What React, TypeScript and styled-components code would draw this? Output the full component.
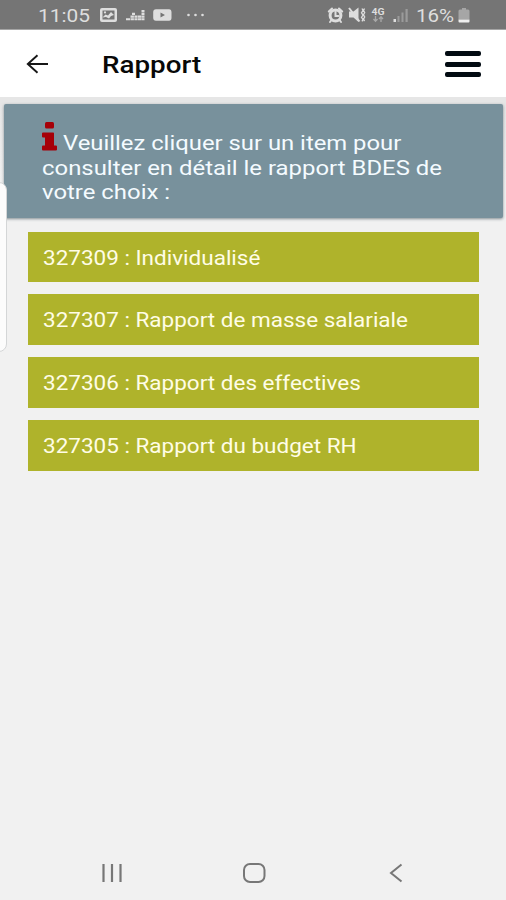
import React from "react";
import styled, { createGlobalStyle } from "styled-components";

const GlobalStyle = createGlobalStyle`
  body { margin: 0; background: #f1f1f1; }
  * { box-sizing: border-box; }
`;

const Screen = styled.div`
  position: relative;
  width: 506px;
  height: 900px;
  display: flex;
  flex-direction: column;
  overflow: hidden;
  background: #f1f1f1;
  font-family: Roboto, sans-serif;
`;

const Wide = styled.span<{ $stretch: number }>`
  display: inline-block;
  white-space: nowrap;
  transform: scaleX(${(p) => p.$stretch});
  transform-origin: left center;
`;

const StatusBar = styled.header`
  height: 30px;
  display: flex;
  justify-content: space-between;
  padding: 0 35px 0 38px;
  background: #757575;
  border-bottom: 1px solid #a5a5a5;
  color: #dedede;
  font-size: 18px;
  line-height: 31px;
`;

const StatusGroup = styled.div`
  display: flex;
`;

const Clock = styled.div`
  width: 61px;
`;

const Charge = styled.div`
  width: 41px;
`;

const TitleBar = styled.div`
  height: 67px;
  display: flex;
  align-items: center;
  background: #fff;
`;

const BackButton = styled.button`
  width: 102px;
  height: 67px;
  padding: 0 0 0 26px;
  display: flex;
  align-items: center;
  border: 0;
  background: none;
`;

const Title = styled.h1`
  flex: 1;
  margin: 0;
  padding-top: 4px;
  font-size: 23px;
  font-weight: 500;
  line-height: 30px;
  color: #080808;
`;

const MenuButton = styled.button`
  width: 61px;
  height: 67px;
  padding: 1px 0 0;
  display: flex;
  flex-direction: column;
  justify-content: center;
  gap: 5.4px;
  border: 0;
  background: none;
`;

const MenuLine = styled.span`
  width: 36px;
  height: 5px;
  border-radius: 2px;
  background: #020b12;
`;

const Notice = styled.section`
  height: 114px;
  margin: 7px 2.6px 0 4px;
  padding: 17px 0 0 38px;
  border-radius: 2px;
  background: #78919c;
  box-shadow: 0 1px 3px rgba(40, 60, 70, 0.55);
  color: #f4fbff;
  font-size: 20.5px;
  line-height: 24.3px;
`;

const NoticeLine = styled.div<{ $lead?: boolean }>`
  display: flex;
  align-items: flex-end;
  gap: 6px;
  height: ${(p) => (p.$lead ? "34.7px" : "24.3px")};

  svg {
    align-self: flex-start;
  }
`;

const Content = styled.main`
  flex: 1;
  background: linear-gradient(#e6e6e6 0, #e6e6e6 8px, #f1f1f1 90px);
`;

const ReportList = styled.ul`
  list-style: none;
  margin: 13.55px 27.5px 0 28.3px;
  padding: 0;
  display: grid;
  gap: 12.25px;
`;

const ReportItem = styled.li`
  height: 50.6px;
  padding-left: 14.7px;
  background: #afb32b;
  color: #fffde6;
  font-size: 20px;
  line-height: 52.6px;
`;

const EdgeHandle = styled.div`
  position: absolute;
  left: -12px;
  top: 182px;
  width: 19px;
  height: 170px;
  border: 1px solid #d4d6d7;
  border-radius: 8px;
  background: #fcfcfc;
`;

const NavBar = styled.nav`
  height: 55px;
  display: flex;
  justify-content: space-between;
  align-items: center;
  padding: 0 103px 0 101px;
`;

const reports = [
  "327309 : Individualisé",
  "327307 : Rapport de masse salariale",
  "327306 : Rapport des effectives",
  "327305 : Rapport du budget RH",
];

const NotificationIcons = () => (
  <svg width="106" height="30" viewBox="99 0 106 30" fill="#dedede">
    <path fillRule="evenodd" d="M102 8h13a2 2 0 0 1 2 2v10a2 2 0 0 1-2 2h-13a2 2 0 0 1-2-2V10a2 2 0 0 1 2-2Zm.5 2.500v9h12v-9Z" />
    <path d="m102.500 17.500 3-3 2.500 1 3-3.500 3 3-3 1-2 2.500-3-1.500Z" />
    <circle cx="105" cy="12.400" r="1.100" />
    <path d="M126 18.200h4v2h-4zM130.500 18.200h3.400v2h-3.400zM134.400 18.200h3.200v2h-3.200zM138 18.200h3.200v2h-3.200zM141.500 18.200h3v2h-3zM130.500 15.500h3.400v2.200h-3.400zM134.400 15.500h3.200v2.200h-3.200zM138 15.500h3.200v2.200h-3.200zM141.500 15.500h3v2.200h-3zM132 12.800h3v2.200h-3zM141.500 12.800h3v2.200h-3zM141.500 10h3v2.200h-3z" />
    <path fillRule="evenodd" d="M156 9.300h13c1.700 0 2.500 1.200 2.500 3v5.500c0 2-.8 3-2.500 3h-13c-1.800 0-2.800-1-2.800-3v-5.500c0-1.800 1-3 2.800-3Zm4.500 3.200v5l4.500-2.500Z" />
    <circle cx="188.500" cy="15" r="1.300" /><circle cx="195.500" cy="15" r="1.300" /><circle cx="202.500" cy="15" r="1.300" />
  </svg>
);

const SignalIcons = () => (
  <svg width="89" height="30" viewBox="327 0 89 30" fill="#dedede">
    <circle cx="335.500" cy="15.500" r="5.400" fill="none" stroke="#dedede" strokeWidth="3" />
    <path d="M335.500 12v4h3M328.800 11.500l3.200-3M342.200 11.500l-3.200-3M331.500 20l-1.500 2M339.500 20l1.500 2" fill="none" stroke="#dedede" strokeWidth="2" strokeLinecap="round" />
    <path d="M349 11.500h4.500l5-4v14.500l-5-4.500H349Z" />
    <path d="m349 8 10.500 13.500" stroke="#dedede" strokeWidth="2" />
    <path d="m362 8.500 1 2-1.500 2.300 1.500 2.300-1.500 2.300 1.500 2-1 2M364.500 8.500l-1 2 1.200 2-1.200 2.300 1.200 2.300-1.200 2 1 2" fill="none" stroke="#dedede" strokeWidth="1.300" />
    <text x="371.500" y="14.500" fontSize="8.500" fontWeight="700" fontFamily="Roboto, sans-serif" textLength="13" lengthAdjust="spacingAndGlyphs">4G</text>
    <path d="M375.500 16v5m-2-2 2 2.300 2-2.300M381 22v-5m-2 2 2-2.300 2 2.300" fill="none" stroke="#a9a9a9" strokeWidth="1.300" />
    <path d="M393.500 19h2.500v3h-2.500z" />
    <path d="M397.500 16h2v6h-2zM401.500 12.500h2v9.500h-2zM405.500 9h2.200v13h-2.200z" fill="#9b9b9b" />
  </svg>
);

const BatteryIcon = () => (
  <svg width="14" height="30" viewBox="457 0 14 30">
    <path d="M460 9.500h2v-1.500h4v1.500h2q1.500 0 1.500 1.500v8.500h-11V11q0-1.500 1.500-1.500Z" fill="#a6a6a6" />
    <path d="M458.500 19.500h11v2q0 1-1 1h-9q-1 0-1-1Z" fill="#efefef" />
  </svg>
);

const BackArrow = () => (
  <svg width="23" height="20" viewBox="0 0 23 20" fill="none" stroke="#171717" strokeWidth="1.900">
    <path d="M22 10H2M11.500 1.200 1.800 10l9.700 8.800" />
  </svg>
);

const InfoIcon = () => (
  <svg width="15" height="30" viewBox="0 0 15 30" fill="#a60008">
    <rect x="3" y="1" width="9" height="6.500" rx="1.500" />
    <path d="M1 11.500h10.200q.8 0 .8.800V24.500h2q1 0 1 1v3q0 1-1 1H1q-1 0-1-1v-3q0-1 1-1h2v-8H1q-1 0-1-1v-3q0-1 1-1Z" />
  </svg>
);

export default function App() {
  return (
    <Screen>
      <GlobalStyle />
      <StatusBar>
        <StatusGroup>
          <Clock><Wide $stretch={1.16}>11:05</Wide></Clock>
          <NotificationIcons />
        </StatusGroup>
        <StatusGroup>
          <SignalIcons />
          <Charge><Wide $stretch={1.14}>16%</Wide></Charge>
          <BatteryIcon />
        </StatusGroup>
      </StatusBar>
      <TitleBar>
        <BackButton aria-label="Retour"><BackArrow /></BackButton>
        <Title><Wide $stretch={1.207}>Rapport</Wide></Title>
        <MenuButton aria-label="Menu"><MenuLine /><MenuLine /><MenuLine /></MenuButton>
      </TitleBar>
      <Content>
        <Notice>
          <NoticeLine $lead><InfoIcon /><Wide $stretch={1.162}>Veuillez cliquer sur un item pour</Wide></NoticeLine>
          <NoticeLine><Wide $stretch={1.166}>consulter en détail le rapport BDES de</Wide></NoticeLine>
          <NoticeLine><Wide $stretch={1.166}>votre choix :</Wide></NoticeLine>
        </Notice>
        <ReportList>
          {reports.map((label) => (
            <ReportItem key={label}><Wide $stretch={1.125}>{label}</Wide></ReportItem>
          ))}
        </ReportList>
      </Content>
      <NavBar>
        <svg width="22" height="20" viewBox="0 0 22 20" stroke="#777" strokeWidth="2.200"><path d="M2.500 1v18M11 1v18M19.500 1v18" /></svg>
        <svg width="26" height="20" viewBox="0 0 26 20" fill="none" stroke="#777" strokeWidth="2"><rect x="1" y="1" width="20.500" height="18" rx="6" /></svg>
        <svg width="14" height="20" viewBox="0 0 14 20" fill="none" stroke="#777" strokeWidth="2"><path d="M12.500 1.500 2 10l10.500 8.500" /></svg>
      </NavBar>
      <EdgeHandle />
    </Screen>
  );
}
